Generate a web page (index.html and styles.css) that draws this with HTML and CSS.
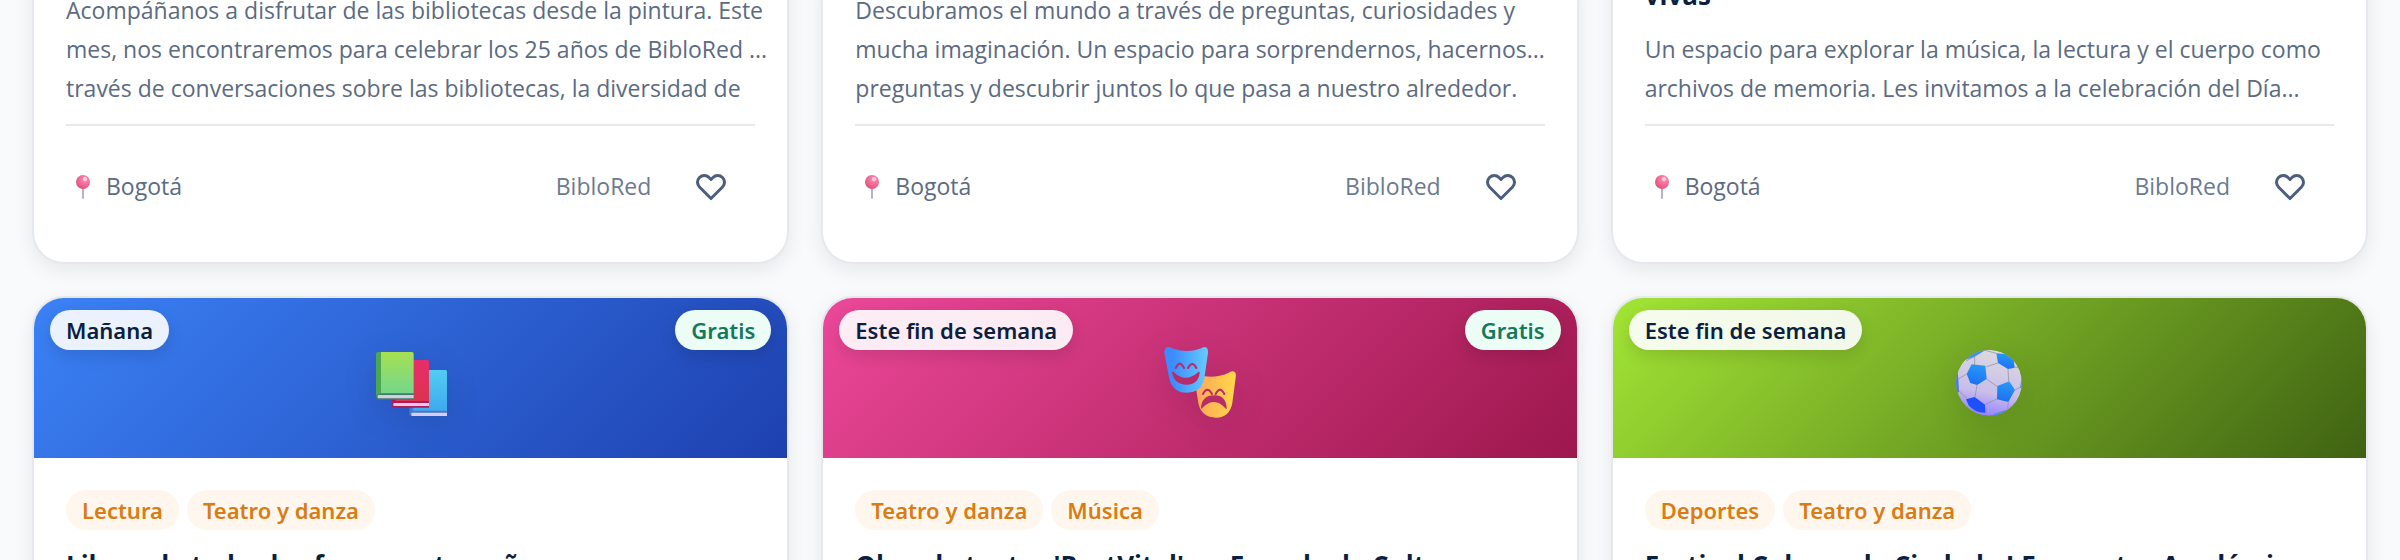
FILE: index.html
```
<!DOCTYPE html>
<html lang="es">
<head>
    <meta charset="UTF-8">
    <meta name="viewport" content="width=device-width, initial-scale=1.0">
    <title>Eventos en Bogotá</title>
    <link rel="stylesheet" href="styles.css">
</head>

<body>
    <!-- Formas compartidas -->
    <svg class="sprite" aria-hidden="true">
        <defs>
            <radialGradient id="pinHead" cx="0.65" cy="0.3" r="0.7">
                <stop offset="0" stop-color="#ffb3cb"/>
                <stop offset="0.3" stop-color="#fb7ba5"/>
                <stop offset="1" stop-color="#e0557f"/>
            </radialGradient>
        </defs>
        <symbol id="pin" viewBox="0 0 32 32">
            <path d="M17 17v11" stroke="#b8b3c4" stroke-width="2" stroke-linecap="round"/>
            <circle cx="17" cy="12" r="7" fill="url(#pinHead)"/>
            <circle cx="19" cy="9" r="2" fill="#ffd0e0"/>
        </symbol>
        <symbol id="heart" viewBox="0 0 24 24">
            <path d="M4.318 6.318a4.5 4.5 0 000 6.364L12 20.364l7.682-7.682a4.5 4.5 0 00-6.364-6.364L12 7.636l-1.318-1.318a4.5 4.5 0 00-6.364 0z" fill="none" stroke="currentColor" stroke-width="2" stroke-linecap="round" stroke-linejoin="round"/>
        </symbol>
    </svg>

    <main class="events">
        <article class="card card-scrolled">
            <div class="card-body">
                <p class="description">Acompáñanos a disfrutar de las bibliotecas desde la pintura. Este<br>mes, nos encontraremos para celebrar los 25 años de BibloRed ...<br>través de conversaciones sobre las bibliotecas, la diversidad de</p>
                <div class="card-footer">
                    <span class="location"><svg class="pin"><use href="#pin"/></svg>Bogotá</span>
                    <span class="source">BibloRed</span>
                    <button type="button" class="favorite" aria-label="Guardar"><svg><use href="#heart"/></svg></button>
                </div>
            </div>
        </article>

        <article class="card card-scrolled">
            <div class="card-body">
                <p class="description">Descubramos el mundo a través de preguntas, curiosidades y<br>mucha imaginación. Un espacio para sorprendernos, hacernos...<br>preguntas y descubrir juntos lo que pasa a nuestro alrededor.</p>
                <div class="card-footer">
                    <span class="location"><svg class="pin"><use href="#pin"/></svg>Bogotá</span>
                    <span class="source">BibloRed</span>
                    <button type="button" class="favorite" aria-label="Guardar"><svg><use href="#heart"/></svg></button>
                </div>
            </div>
        </article>

        <article class="card card-scrolled">
            <div class="card-body">
                <h3>vivas</h3>
                <p class="description">Un espacio para explorar la música, la lectura y el cuerpo como<br>archivos de memoria. Les invitamos a la celebración del Día...</p>
                <div class="card-footer">
                    <span class="location"><svg class="pin"><use href="#pin"/></svg>Bogotá</span>
                    <span class="source">BibloRed</span>
                    <button type="button" class="favorite" aria-label="Guardar"><svg><use href="#heart"/></svg></button>
                </div>
            </div>
        </article>

        <article class="card">
            <div class="card-image reading">
                <span class="badge date">Mañana</span>
                <span class="badge free">Gratis</span>
                <svg class="emoji" viewBox="27 3 252 252">
                    <defs>
                        <linearGradient id="bookGreen" x2="0" y2="1"><stop stop-color="#a5e052"/><stop offset="1" stop-color="#75d78c"/></linearGradient>
                        <linearGradient id="bookRed" x2="0" y2="1"><stop stop-color="#e62e6b"/><stop offset="1" stop-color="#dc3350"/></linearGradient>
                        <linearGradient id="bookBlue" x2="0" y2="1"><stop stop-color="#52cdf2"/><stop offset="1" stop-color="#3fa9ef"/></linearGradient>
                    </defs>
                    <path d="M148 112q0-7 7-7h101q5 0 5 5v133H154q-6 0-6-7z" fill="#4877c8"/>
                    <path d="M160 105h96q5 0 5 5v117H160z" fill="url(#bookBlue)"/>
                    <path d="M155 233h106v10H155q-3-5 0-10z" fill="#d5cdf5"/>
                    <path d="M95 82q0-7 7-7h100q5 0 5 5v138h-105q-7 0-7-8z" fill="#a91d5b"/>
                    <path d="M107 75h95q5 0 5 5v118H107z" fill="url(#bookRed)"/>
                    <path d="M101 204h106v9H101q-3-4 0-9z" fill="#f0c4e6"/>
                    <path d="M48 58q0-7 7-7h101q5 0 5 5v138H55q-7 0-7-8z" fill="#3e7d68"/>
                    <path d="M48 58q0-7 7-7h8v125q-10 0-15 6z" fill="#4ba751"/>
                    <path d="M63 51h92q6 0 6 6v118H63z" fill="url(#bookGreen)"/>
                    <path d="M54 180h107v10H54q-3-5 0-10z" fill="#d6cce2"/>
                </svg>
            </div>
            <div class="card-body">
                <div class="tags">
                    <span class="tag">Lectura</span>
                    <span class="tag">Teatro y danza</span>
                </div>
                <h3>Libros de todas las formas y tamaños</h3>
            </div>
        </article>

        <article class="card">
            <div class="card-image theater">
                <span class="badge date">Este fin de semana</span>
                <span class="badge free">Gratis</span>
                <svg class="emoji" viewBox="24 3 252 252">
                    <defs>
                        <linearGradient id="maskBlue"><stop offset="0.2" stop-color="#3d8cff"/><stop offset="1" stop-color="#66ccff"/></linearGradient>
                        <linearGradient id="maskGold"><stop offset="0.1" stop-color="#ffa957"/><stop offset="1" stop-color="#ffd84a"/></linearGradient>
                    </defs>
                    <path d="M134 132q0-12 11-12 47 13 90-6 12-10 20-2 4 4 2 16l-10 76q-8 44-49 44-43 0-53-43z" fill="url(#maskGold)"/>
                    <path d="M43 54q0-17 11-18 8 0 16 5 40 14 80 0 8-5 15-5 10 2 9 17l-11 77q-8 43-52 43-43 0-53-42z" fill="url(#maskBlue)"/>
                    <g fill="none" stroke="#b52c68" stroke-width="6" stroke-linecap="round">
                        <path d="M77 99q12-25 25 0M114 99q13-24 25 0"/>
                        <path d="M159 177q13-25 27 0M197 177q13-25 26 0"/>
                    </g>
                    <path d="M66 112q0-5 5-1 35 35 74 0 4-3 4 2-4 36-40 36-36 0-43-37z" fill="#b52c68"/>
                    <path d="M153 219q2-38 40-38 35 0 37 38 0 5-4 1-33-37-69-1-4 5-4 0z" fill="#b52c68"/>
                </svg>
            </div>
            <div class="card-body">
                <div class="tags">
                    <span class="tag">Teatro y danza</span>
                    <span class="tag">Música</span>
                </div>
                <h3>Obra de teatro 'PostVital' en Escuela de Cultura</h3>
            </div>
        </article>

        <article class="card">
            <div class="card-image sports">
                <span class="badge date">Este fin de semana</span>
                <svg class="emoji" viewBox="21 3 252 252">
                    <defs>
                        <linearGradient id="ball" x1="0.6" y1="0" x2="0.4" y2="1"><stop stop-color="#dddbdf"/><stop offset="0.65" stop-color="#c8bee9"/><stop offset="1" stop-color="#9580ff"/></linearGradient>
                        <linearGradient id="patch" x1="0.6" y1="0" x2="0.4" y2="1"><stop stop-color="#299af8"/><stop offset="1" stop-color="#1c6ff5"/></linearGradient>
                        <clipPath id="ballClip"><circle cx="147" cy="143" r="99"/></clipPath>
                    </defs>
                    <g clip-path="url(#ballClip)">
                        <circle cx="147" cy="143" r="99" fill="url(#ball)"/>
                        <path d="M66 78q24-34 70-34l-4 4-28 17z" fill="#4590e6"/>
                        <path d="M169 55l28 2 24 19 3 22-20 4-30-18z" fill="url(#patch)"/>
                        <path d="M80 117l15-29 41 4 4 40-29 18-20-6z" fill="url(#patch)"/>
                        <path d="M172 153l36-14 17 26-20 36-34-8z" fill="url(#patch)"/>
                        <path d="M78 193l26-7 31 23 1 24q-32 1-50-22z" fill="#1e50fa"/>
                        <path d="M45 112h8l2 20 2 40h-8z" fill="#4778e8"/>
                        <path d="M240 98l8 30-3 32-5-2 4-24zM203 223l-32 22-12-7z" fill="#5a86fb"/>
                        <path d="M104 65v25M169 55l-37-10M174 84l-34 11M204 102l2 36M221 96l24 2M111 150l-6 36M140 132l32 23M80 117l-25 15M80 190l-25-25M135 209l36-17M225 165l20-10M205 201l-2 22M104 65L78 78" fill="none" stroke="#8d87a3" stroke-width="2"/>
                    </g>
                </svg>
            </div>
            <div class="card-body">
                <div class="tags">
                    <span class="tag">Deportes</span>
                    <span class="tag">Teatro y danza</span>
                </div>
                <h3>Festival Colores de Ciudad - I Encuentro Académico</h3>
            </div>
        </article>
    </main>
</body>
</html>
```
FILE: styles.css
```
* {
    margin: 0;
    padding: 0;
    box-sizing: border-box;
}

body {
    height: 100vh;
    overflow: hidden;
    background: #f8fafc;
    color: #0f172a;
    font-family: "Segoe UI", "Open Sans", "Noto Sans", sans-serif;
}

.sprite {
    position: absolute;
    width: 0;
    height: 0;
}

.events {
    display: grid;
    grid-template-columns: repeat(3, minmax(0, 1fr));
    gap: 32px;
    padding: 0 32px 32px;
    margin-top: -24px;
}

.card {
    display: flex;
    flex-direction: column;
    background: #fff;
    border: 2px solid #e5e9ee;
    border-radius: 32px;
    box-shadow: 0 6px 20px rgba(0, 0, 0, 0.08);
    overflow: hidden;
}

.card-image {
    position: relative;
    display: flex;
    align-items: center;
    justify-content: center;
    height: 160px;
}

.reading {
    background: linear-gradient(135deg, #3b82f6, #1e40af);
}

.theater {
    background: linear-gradient(135deg, #ec4899, #9d174d);
}

.sports {
    background: linear-gradient(135deg, #a3e635, #3f6212);
}

.emoji {
    width: 84px;
    height: 84px;
    filter: drop-shadow(0 8px 16px rgba(0, 0, 0, 0.1));
}

.badge,
.tag {
    padding: 0 16px;
    border-radius: 20px;
    font-family: "Segoe UI", "Noto Sans", sans-serif;
    font-size: 22px;
    font-weight: 600;
    line-height: 40px;
}

.badge {
    position: absolute;
    top: 12px;
    box-shadow: 0 6px 16px rgba(0, 0, 0, 0.12);
}

.date {
    left: 16px;
    background: rgba(255, 255, 255, 0.9);
    color: #0b1f3f;
}

.free {
    right: 16px;
    background: #ecfdf5;
    color: #14795a;
}

.card-body {
    flex: 1;
    display: flex;
    flex-direction: column;
    padding: 32px;
}

/* Primera fila: solo se ve la parte inferior de las tarjetas */
.card-scrolled {
    border-top: none;
    border-radius: 0 0 32px 32px;
}

.card-scrolled .card-body {
    justify-content: flex-end;
    padding-top: 0;
}

.tags {
    display: flex;
    gap: 8px;
    margin-bottom: 16px;
}

.tag {
    background: #fff7ed;
    color: #d97c14;
}

h3 {
    color: #0b1f3f;
    font-size: 26px;
    font-weight: 700;
    line-height: 38px;
    white-space: nowrap;
}

.card-scrolled h3 {
    margin-bottom: 16px;
}

.description {
    margin-bottom: 16px;
    color: #5b6b82;
    font-size: 23px;
    line-height: 39px;
    white-space: nowrap;
}

.card-footer {
    display: flex;
    align-items: center;
    padding: 24px 0 8px;
    border-top: 2px solid #e5e9ea;
    color: #5b6b82;
    font-size: 23px;
}

.location {
    display: flex;
    align-items: center;
    gap: 8px;
    margin-right: auto;
}

.pin {
    width: 32px;
    height: 32px;
}

.source {
    margin-right: 16px;
    color: #6b7a90;
}

.favorite {
    padding: 18px 26px;
    border: none;
    background: none;
    color: #4b5f7c;
    cursor: pointer;
}

.favorite svg {
    display: block;
    width: 36px;
    height: 36px;
}
```
